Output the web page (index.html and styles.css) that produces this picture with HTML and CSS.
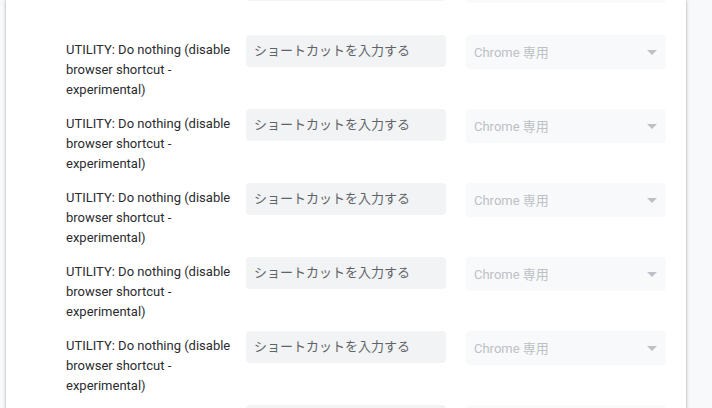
FILE: index.html
```html
<!DOCTYPE html>
<html lang="ja">
<head>
<meta charset="utf-8">
<title>Shortcuts</title>
<link rel="stylesheet" href="styles.css">
</head>
<body>
<div class="card">
  <div class="list">
    <div class="row partial top">
      <div class="label"></div>
      <div class="shortcut"></div>
      <div class="scope"></div>
    </div>
    <div class="row">
      <div class="label">UTILITY: Do nothing (disable browser shortcut - experimental)</div>
      <div class="shortcut"><span class="placeholder">ショートカットを入力する</span></div>
      <div class="scope"><span class="scope-text">Chrome 専用</span><span class="arrow"></span></div>
    </div>
    <div class="row">
      <div class="label">UTILITY: Do nothing (disable browser shortcut - experimental)</div>
      <div class="shortcut"><span class="placeholder">ショートカットを入力する</span></div>
      <div class="scope"><span class="scope-text">Chrome 専用</span><span class="arrow"></span></div>
    </div>
    <div class="row">
      <div class="label">UTILITY: Do nothing (disable browser shortcut - experimental)</div>
      <div class="shortcut"><span class="placeholder">ショートカットを入力する</span></div>
      <div class="scope"><span class="scope-text">Chrome 専用</span><span class="arrow"></span></div>
    </div>
    <div class="row">
      <div class="label">UTILITY: Do nothing (disable browser shortcut - experimental)</div>
      <div class="shortcut"><span class="placeholder">ショートカットを入力する</span></div>
      <div class="scope"><span class="scope-text">Chrome 専用</span><span class="arrow"></span></div>
    </div>
    <div class="row">
      <div class="label">UTILITY: Do nothing (disable browser shortcut - experimental)</div>
      <div class="shortcut"><span class="placeholder">ショートカットを入力する</span></div>
      <div class="scope"><span class="scope-text">Chrome 専用</span><span class="arrow"></span></div>
    </div>
    <div class="row partial">
      <div class="label"></div>
      <div class="shortcut"></div>
      <div class="scope"></div>
    </div>
  </div>
</div>
</body>
</html>
```
FILE: styles.css
```css
html, body {
  margin: 0;
  padding: 0;
  height: 100%;
  overflow: hidden;
}
body {
  background: #f8f9fa;
  font-family: Roboto, "Noto Sans CJK JP", sans-serif;
  font-size: 13px;
  color: #202124;
}
.card {
  margin-left: 6px;
  width: 680px;
  min-height: 100%;
  background: #ffffff;
  box-shadow: 0 1px 2px 0 rgba(60, 64, 67, 0.3), 0 1px 3px 1px rgba(60, 64, 67, 0.15);
  box-sizing: border-box;
  padding: 0 20px 0 60px;
}
.list {
  display: flex;
  flex-direction: column;
  gap: 9px;
}
.row {
  display: flex;
  align-items: flex-start;
}
.row.top {
  margin-top: -31px;
  margin-bottom: 23px;
}
.label {
  width: 170px;
  margin-right: 10px;
  margin-top: 5px;
  line-height: 20px;
  color: #2b2c2f;
}
.shortcut {
  width: 200px;
  height: 32px;
  box-sizing: border-box;
  background: #f1f3f4;
  border-radius: 4px;
  padding: 0 0 3px 8px;
  display: flex;
  align-items: center;
}
.placeholder {
  font-family: "Noto Sans CJK JP", sans-serif;
  font-size: 13px;
  color: #5f6368;
}
.scope {
  width: 200px;
  height: 34px;
  margin-left: 20px;
  box-sizing: border-box;
  background: #f8f9fa;
  border-radius: 4px;
  padding: 0 9px 2px 8px;
  display: flex;
  align-items: center;
  justify-content: space-between;
}
.scope-text {
  color: #bdc1c6;
  font-size: 13px;
}
.arrow {
  width: 0;
  height: 0;
  margin-top: 2px;
  border-left: 5px solid transparent;
  border-right: 5px solid transparent;
  border-top: 5px solid #bdc1c6;
}
```
